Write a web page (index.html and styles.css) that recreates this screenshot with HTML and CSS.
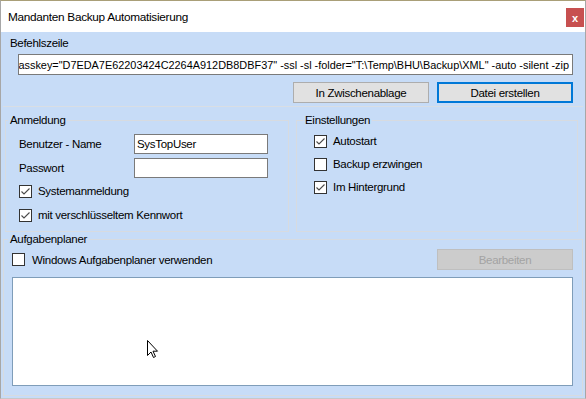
FILE: index.html
```html
<!DOCTYPE html>
<html lang="de">
<head>
<meta charset="utf-8">
<title>Mandanten Backup Automatisierung</title>
<link rel="stylesheet" href="styles.css">
</head>
<body>
<div class="window">
  <div class="titlebar">
    <span class="title">Mandanten Backup Automatisierung</span>
    <div class="close">x</div>
  </div>
  <div class="client">
    <div class="cmd-section">
      <div class="label">Befehlszeile</div>
      <div class="cmd"><span>-passkey="D7EDA7E62203424C2264A912DB8DBF37" -ssl -sl -folder="T:\Temp\BHU\Backup\XML" -auto -silent -zip</span></div>
      <div class="btnrow">
        <div class="btn">In Zwischenablage</div>
        <div class="btn default">Datei erstellen</div>
      </div>
    </div>
    <div class="panel">
      <div class="groups">
        <fieldset class="group anmeldung">
          <legend>Anmeldung</legend>
          <div class="gbody">
            <div class="field first">
              <span class="flabel">Benutzer - Name</span>
              <div class="input">SysTopUser</div>
            </div>
            <div class="field">
              <span class="flabel">Passwort</span>
              <div class="input"></div>
            </div>
            <div class="check c1">
              <span class="box"><svg viewBox="0 0 13 13" width="13" height="13"><polyline points="2.5,6.5 5,9 10.5,3.5" fill="none" stroke="#4a4a4a" stroke-width="1.1"/></svg></span>
              <span>Systemanmeldung</span>
            </div>
            <div class="check c2">
              <span class="box"><svg viewBox="0 0 13 13" width="13" height="13"><polyline points="2.5,6.5 5,9 10.5,3.5" fill="none" stroke="#4a4a4a" stroke-width="1.1"/></svg></span>
              <span>mit verschlüsseltem Kennwort</span>
            </div>
          </div>
        </fieldset>
        <fieldset class="group einstellungen">
          <legend>Einstellungen</legend>
          <div class="gbody">
            <div class="check e1">
              <span class="box"><svg viewBox="0 0 13 13" width="13" height="13"><polyline points="2.5,6.5 5,9 10.5,3.5" fill="none" stroke="#4a4a4a" stroke-width="1.1"/></svg></span>
              <span>Autostart</span>
            </div>
            <div class="check e2">
              <span class="box"></span>
              <span>Backup erzwingen</span>
            </div>
            <div class="check e2">
              <span class="box"><svg viewBox="0 0 13 13" width="13" height="13"><polyline points="2.5,6.5 5,9 10.5,3.5" fill="none" stroke="#4a4a4a" stroke-width="1.1"/></svg></span>
              <span>Im Hintergrund</span>
            </div>
          </div>
        </fieldset>
      </div>
      <fieldset class="group aufgaben">
        <legend>Aufgabenplaner</legend>
        <div class="gbody">
          <div class="taskrow">
            <div class="check">
              <span class="box"></span>
              <span>Windows Aufgabenplaner verwenden</span>
            </div>
            <div class="btn disabled">Bearbeiten</div>
          </div>
          <div class="list">
            <svg class="cursor" width="12" height="19" viewBox="0 0 12 19"><path d="M0.5,0.5 L0.5,15.5 L4,12 L6.5,17.5 L8.5,16.5 L6,11.2 L10.5,11.2 Z" fill="#fff" stroke="#000" stroke-width="1"/></svg>
          </div>
        </div>
      </fieldset>
    </div>
  </div>
</div>
</body>
</html>
```
FILE: styles.css
```css
html, body {
  margin: 0;
  padding: 0;
  background: #ffffff;
}
body {
  font-family: "Liberation Sans", Arial, sans-serif;
  font-size: 11.5px;
  letter-spacing: -0.3px;
  color: #000;
}
.window {
  width: 586px;
  height: 399px;
  box-sizing: border-box;
  border-top: 1px solid #a99f78;
  border-left: 1px solid #a7a7a7;
  border-right: 1px solid #a7a7a7;
  border-bottom: 1px solid #c8c8c8;
  display: flex;
  flex-direction: column;
  background: #fff;
}
.titlebar {
  height: 31px;
  flex: none;
  display: flex;
  align-items: center;
  padding-left: 7px;
  padding-right: 1px;
  background: #fff;
}
.title {
  font-size: 11.8px;
  letter-spacing: -0.3px;
  flex: 1;
  padding-top: 1px;
}
.close {
  width: 18px;
  height: 19px;
  background: #c75050;
  color: #fff;
  font-weight: bold;
  font-size: 11px;
  letter-spacing: 0;
  display: flex;
  align-items: center;
  justify-content: center;
  margin-top: 2px;
}
.client {
  flex: 1;
  background: #c7dcf7;
  display: flex;
  flex-direction: column;
  padding: 0 2px 2px 2px;
}
.cmd-section {
  padding: 3px 0 0 0;
}
.label {
  padding-left: 7px;
  line-height: 14px;
  height: 14px;
  margin-top: 1px;
}
.cmd {
  margin: 4px 0 0 15px;
  width: 555px;
  height: 21px;
  box-sizing: border-box;
  border: 1px solid #7a7a7a;
  background: #fff;
  display: flex;
  justify-content: flex-end;
  align-items: center;
  overflow: hidden;
  white-space: nowrap;
  padding-right: 3px;
  font-size: 10.9px;
  letter-spacing: 0;
}
.cmd span {
  flex: none;
}
.btnrow {
  display: flex;
  justify-content: flex-end;
  gap: 8px;
  width: 570px;
  margin-top: 7px;
}
.btn {
  width: 136px;
  height: 21px;
  box-sizing: border-box;
  border: 1px solid #adadad;
  background: #e1e1e1;
  display: flex;
  align-items: center;
  justify-content: center;
}
.btn.default {
  border: 2px solid #0078d7;
}
.btn.disabled {
  background: #cccccc;
  border-color: #bfbfbf;
  color: #a3a3a3;
}
.panel {
  flex: 1;
  margin-top: 3px;
  border-top: 1px solid #d9dee4;
  display: flex;
  flex-direction: column;
}
.groups {
  display: flex;
  margin-top: 6px;
  padding-left: 2px;
  gap: 7px;
}
fieldset.group {
  margin: 0;
  border: 1px solid #d7dbe0;
  padding: 0;
  box-sizing: border-box;
  min-width: 0;
}
fieldset.group legend {
  padding: 0 2px;
  margin-left: 2px;
  line-height: 14px;
}
.anmeldung {
  width: 284px;
}
.anmeldung .gbody {
  padding: 0 0 6px 13px;
}
.einstellungen {
  width: 282px;
}
.einstellungen legend {
  margin-left: 6px !important;
}
.einstellungen .gbody {
  padding: 0 0 31px 17px;
}
.field {
  display: flex;
  align-items: center;
  height: 20px;
  margin-top: 4px;
}
.field.first {
  margin-top: 7px;
}
.flabel {
  width: 115px;
}
.input {
  width: 134px;
  height: 20px;
  box-sizing: border-box;
  border: 1px solid #7a7a7a;
  background: #fff;
  padding: 0 2px;
  line-height: 18px;
}
.check {
  display: flex;
  align-items: center;
  height: 20px;
  gap: 6px;
}
.check.c1 { margin-top: 3px; }
.check.c2 { margin-top: 4px; }
.check.e1 { margin-top: 4px; }
.check.e2 { margin-top: 3px; }
.box {
  width: 13px;
  height: 13px;
  box-sizing: border-box;
  border: 1px solid #333;
  background: #fff;
  display: flex;
  align-items: center;
  justify-content: center;
  overflow: hidden;
  flex: none;
}
.box svg {
  flex: none;
}
.aufgaben {
  flex: 1;
  margin-top: 12px;
  display: flex;
  flex-direction: column;
}
.aufgaben legend {
  margin-left: 4px !important;
}
.aufgaben .gbody {
  flex: 1;
  padding: 0 9px 9px 8px;
  display: flex;
  flex-direction: column;
}
.taskrow {
  display: flex;
  justify-content: space-between;
  align-items: center;
  margin-top: 3px;
}
.taskrow .check {
  gap: 7px;
}
.list {
  position: relative;
  margin-top: 7px;
  flex: 1;
  box-sizing: border-box;
  border: 1px solid #7f9db9;
  background: #fff;
}
.cursor {
  position: absolute;
  left: 134px;
  top: 62px;
}
```
